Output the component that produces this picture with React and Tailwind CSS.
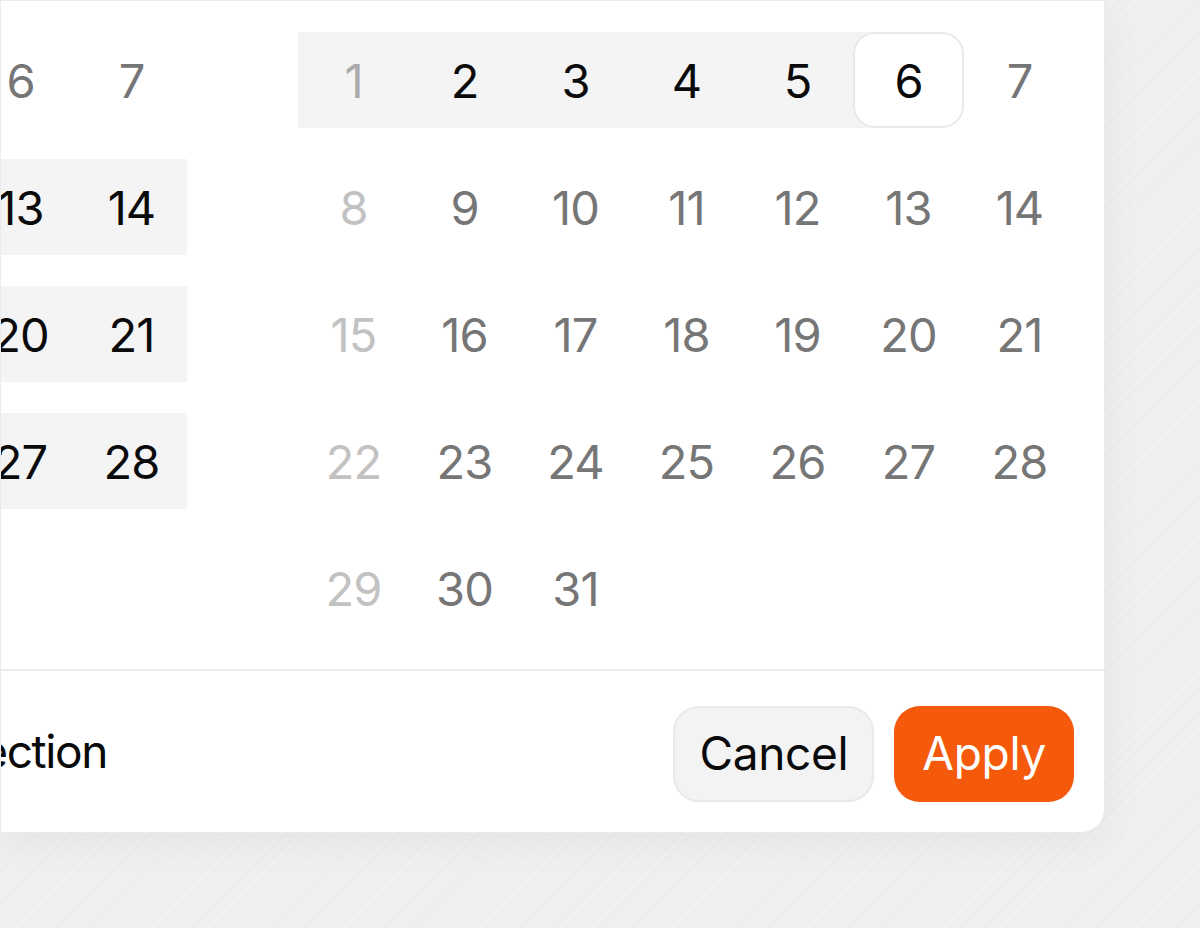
import React from "react";

// Feb 2021 and Mar 2021 both start on a Monday
const months = [
  { name: "February", days: 28, offset: 0, key: "feb" },
  { name: "March", days: 31, offset: 0, key: "mar" },
];

// selection: Feb 9 -> Mar 6
const inRange = (m, d) => {
  if (m === "feb") return d >= 9;
  return d <= 6;
};
const isStart = (m, d) => m === "feb" && d === 9;
const isEnd = (m, d) => m === "mar" && d === 6;

const DayCell = ({ month, day, col }) => {
  const muted = col === 0;
  const range = inRange(month, day);
  const start = isStart(month, day);
  const end = isEnd(month, day);

  let color = "text-[#767676]";
  if (range) color = "text-[#0a0a0a]";
  if (muted) color = range ? "text-[#ababab]" : "text-[#c2c2c2]";

  if (start || end) {
    return (
      <div
        className={`h-[96px] ${
          end
            ? "bg-[linear-gradient(to_right,#f4f4f4_50%,transparent_50%)]"
            : "bg-[linear-gradient(to_left,#f4f4f4_50%,transparent_50%)]"
        }`}
      >
        <div className="h-full rounded-[22px] border-2 border-[#e9e9e9] bg-white flex items-center justify-center text-[#0a0a0a]">
          {day}
        </div>
      </div>
    );
  }

  return (
    <div
      className={`h-[96px] flex items-center justify-center ${color} ${
        range ? "bg-[#f4f4f4]" : ""
      }`}
    >
      {day}
    </div>
  );
};

const Month = ({ month }) => {
  const cells = [];
  for (let i = 0; i < month.offset; i++) cells.push(<div key={`e${i}`} />);
  for (let d = 1; d <= month.days; d++) {
    const col = (month.offset + d - 1) % 7;
    cells.push(<DayCell key={d} month={month.key} day={d} col={col} />);
  }
  return (
    <div className="grid grid-cols-[repeat(7,111px)] gap-y-[31px] shrink-0 content-start">
      {cells}
    </div>
  );
};

export default function App() {
  return (
    <div className="w-[1200px] h-[928px] overflow-hidden bg-[#efefef] bg-[repeating-linear-gradient(135deg,#f0f0f0_0px,#f0f0f0_7px,#ebebeb_7px,#ebebeb_8px)] font-[Inter,'Noto_Sans',sans-serif]">
      <div className="w-[1105px] h-[833px] bg-white border border-[#ebebeb] rounded-br-[24px] overflow-hidden flex flex-col shadow-[0_10px_40px_rgba(0,0,0,0.05)]">
        {/* calendars */}
        <div className="flex gap-[111px] ml-[-591px] pt-[31px] pb-[32px] h-[668px] text-[47px] leading-none tracking-[-0.02em]">
          {months.map((m) => (
            <Month key={m.key} month={m} />
          ))}
        </div>

        {/* footer */}
        <div className="flex-1 border-t-2 border-[#ebebeb] flex items-center justify-between pr-[30px] tracking-[-0.02em]">
          <div className="ml-[-591px] w-[697px] text-right text-[46px] text-[#0a0a0a] tracking-[-0.03em]">
            Clear selection
          </div>
          <div className="flex items-center gap-[20px] text-[46px] mt-[4px]">
            <button className="h-[96px] px-[24px] rounded-[26px] bg-[#f3f3f3] border-2 border-[#e9e9e9] text-[#0a0a0a]">
              Cancel
            </button>
            <button className="h-[96px] px-[28px] rounded-[26px] bg-[#f4590c] text-white">
              Apply
            </button>
          </div>
        </div>
      </div>
    </div>
  );
}
